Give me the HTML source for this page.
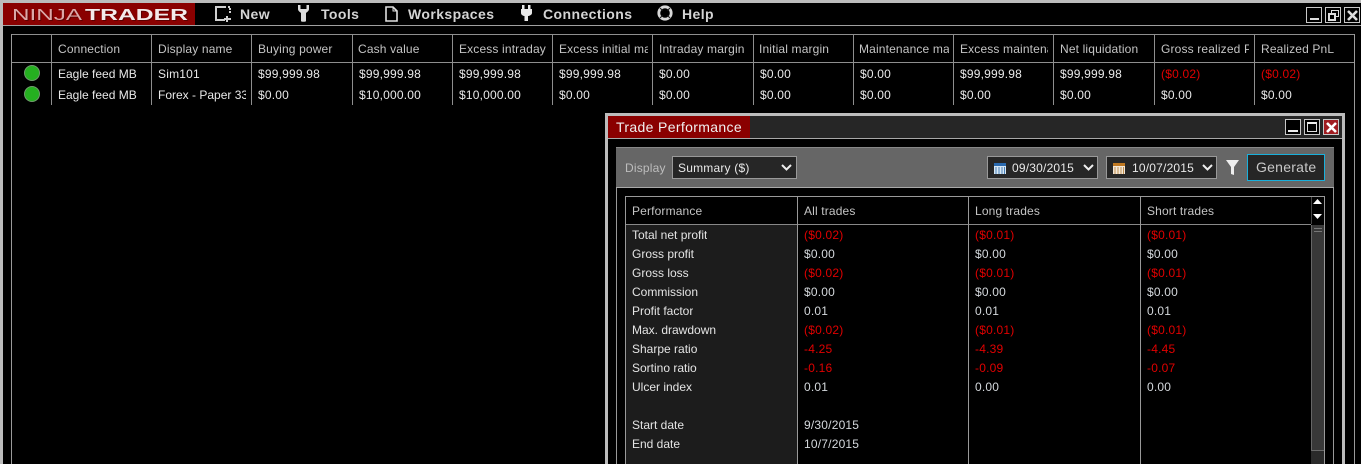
<!DOCTYPE html>
<html><head><meta charset="utf-8"><style>
html,body{margin:0;padding:0;background:#000;width:1361px;height:464px;overflow:hidden}
body{position:relative;font-family:"Liberation Sans",sans-serif;font-size:12px;color:#e8e8e8}
div{position:absolute;box-sizing:border-box}
svg{position:absolute;overflow:visible}
.t{white-space:nowrap;overflow:hidden;height:14px;line-height:14px;letter-spacing:.2px}
.t.h{color:#c4c4c4;top:42px;letter-spacing:.15px}
.a{top:67px}.b{top:88px}
.t.n{letter-spacing:0}
.t.m{font-weight:bold;font-size:14px;color:#d4d4d4;top:6px;height:16px;line-height:16px;letter-spacing:.42px}
.v{background:#8e8e8e;width:1px;top:34px;height:71px}
.wv{background:#999;width:1px;top:197px;height:267px}
.l{left:632px;color:#e4e4e4}
.c1{left:804px;color:#d4d8dc}.c2{left:975px;color:#d4d8dc}.c3{left:1147px;color:#d4d8dc}
.t.r{color:#e00000}
.dd{background:#262626;border:1px solid #999;height:23px;top:156px}
.btn{border:1px solid #c8c8c8;background:#000}
</style></head><body>
<!-- outer frame -->
<div style="left:0;top:0;width:1361px;height:3px;background:#bcbcbc"></div>
<div style="left:0;top:0;width:3px;height:464px;background:#bcbcbc"></div>
<div style="left:3px;top:25px;width:1358px;height:1px;background:#a0a0a0"></div>
<!-- logo -->
<div style="left:3px;top:3px;width:192px;height:22px;background:#8a0000"></div>
<svg style="left:0;top:0" width="200" height="26" font-family="Liberation Sans" font-size="15.500">
<text x="13" y="21" fill="#5a0000" textLength="70" lengthAdjust="spacingAndGlyphs">NINJA</text>
<text x="86" y="21" font-weight="bold" fill="#5a0000" textLength="103" lengthAdjust="spacingAndGlyphs">TRADER</text>
<text x="12" y="20" fill="#dca8a8" textLength="70" lengthAdjust="spacingAndGlyphs">NINJA</text>
<text x="85" y="20" font-weight="bold" fill="#f4eaea" textLength="103" lengthAdjust="spacingAndGlyphs">TRADER</text>
</svg>
<!-- menu -->
<svg style="left:215px;top:6px" width="16" height="16" fill="none" stroke="#d0d0d0" stroke-width="2">
<path d="M11 1H1V14H10"/><path d="M13 1H15V8" stroke-dasharray="2 1"/><path d="M12 10V16M9 13H16"/></svg>
<div class="t m" style="left:240px">New</div>
<svg style="left:297px;top:5px" width="13" height="17" fill="#dcdcdc"><path d="M1 0V4C1 6 3 7 4 8V16C4 17 9 17 9 16V8C10 7 12 6 12 4V0L9.500 0V4H3.500V0Z"/></svg>
<div class="t m" style="left:321px">Tools</div>
<svg style="left:385px;top:6px" width="13" height="16" fill="none" stroke="#e0e0e0" stroke-width="1.600"><path d="M1 1H8L12 5V15H1Z"/><path d="M8 1V5H12" stroke-width="1"/></svg>
<div class="t m" style="left:408px">Workspaces</div>
<svg style="left:520px;top:5px" width="13" height="17" fill="#e8e8e8"><path d="M2 0H4.500V4H8V0H10.500V4H12V8C12 10 9 11 8 11V16H4.500V11C3.500 11 1 10 1 8V4H2Z"/></svg>
<div class="t m" style="left:543px">Connections</div>
<svg style="left:657px;top:5px" width="16" height="16" fill="none"><circle cx="8" cy="8" r="6.200" stroke="#d8d8d8" stroke-width="2.800"/><path d="M3 3L5.500 5.500M13 3L10.500 5.500M3 13L5.500 10.500M13 13L10.500 10.500" stroke="#222" stroke-width="1.200"/></svg>
<div class="t m" style="left:682px">Help</div>
<!-- main window buttons -->
<div class="btn" style="left:1306px;top:7px;width:16px;height:16px"><div style="left:3px;top:10px;width:9px;height:2px;background:#ddd"></div></div>
<div class="btn" style="left:1325px;top:7px;width:16px;height:16px">
<div style="left:5px;top:2px;width:8px;height:7px;border:1.500px solid #ddd"></div>
<div style="left:2px;top:5px;width:8px;height:8px;border:2px solid #ddd;background:#000"></div></div>
<div class="btn" style="left:1344px;top:7px;width:16px;height:16px">
<svg style="left:2px;top:2px" width="11" height="11" stroke="#ddd" stroke-width="2.600"><path d="M1 1L10 10M10 1L1 10"/></svg></div>
<!-- main table -->
<div style="left:11px;top:34px;width:1343px;height:1px;background:#8e8e8e"></div>
<div style="left:11px;top:62px;width:1343px;height:1px;background:#8e8e8e"></div>
<div style="left:11px;top:34px;width:1px;height:430px;background:#9a9a9a"></div>
<div style="left:1354px;top:34px;width:1px;height:430px;background:#9a9a9a"></div>
<div class="v" style="left:51px"></div><div class="v" style="left:151px"></div><div class="v" style="left:251px"></div><div class="v" style="left:352px"></div><div class="v" style="left:452px"></div><div class="v" style="left:552px"></div><div class="v" style="left:652px"></div><div class="v" style="left:753px"></div><div class="v" style="left:853px"></div><div class="v" style="left:953px"></div><div class="v" style="left:1053px"></div><div class="v" style="left:1154px"></div><div class="v" style="left:1254px"></div>
<div class="t h" style="left:58px;width:90px">Connection</div>
<div class="t h" style="left:158px;width:90px">Display name</div>
<div class="t h" style="left:258px;width:90px">Buying power</div>
<div class="t h" style="left:358px;width:90px">Cash value</div>
<div class="t h" style="left:459px;width:87px">Excess intraday</div>
<div class="t h" style="left:559px;width:89px">Excess initial margin</div>
<div class="t h" style="left:659px;width:90px">Intraday margin</div>
<div class="t h" style="left:759px;width:90px">Initial margin</div>
<div class="t h" style="left:859px;width:90px">Maintenance margin</div>
<div class="t h" style="left:960px;width:88px">Excess maintenance</div>
<div class="t h" style="left:1060px;width:90px">Net liquidation</div>
<div class="t h" style="left:1161px;width:88px">Gross realized PnL</div>
<div class="t h" style="left:1261px;width:90px">Realized PnL</div>
<div style="left:24px;top:65px;width:16px;height:16px;border-radius:50%;background:#25b020;border:1px solid #6f9a6c"></div>
<div style="left:24px;top:86px;width:16px;height:16px;border-radius:50%;background:#25b020;border:1px solid #6f9a6c"></div>
<div class="t a n" style="left:58px">Eagle feed MB</div><div class="t a" style="left:158px">Sim101</div><div class="t a" style="left:258px">$99,999.98</div><div class="t a" style="left:359px">$99,999.98</div><div class="t a" style="left:459px">$99,999.98</div><div class="t a" style="left:559px">$99,999.98</div><div class="t a" style="left:659px">$0.00</div><div class="t a" style="left:760px">$0.00</div><div class="t a" style="left:860px">$0.00</div><div class="t a" style="left:960px">$99,999.98</div><div class="t a" style="left:1060px">$99,999.98</div><div class="t a r" style="left:1161px">($0.02)</div><div class="t a r" style="left:1261px">($0.02)</div>
<div class="t b n" style="left:58px">Eagle feed MB</div><div class="t b n" style="left:158px;width:88px">Forex - Paper 33333</div><div class="t b" style="left:258px">$0.00</div><div class="t b" style="left:359px">$10,000.00</div><div class="t b" style="left:459px">$10,000.00</div><div class="t b" style="left:559px">$0.00</div><div class="t b" style="left:659px">$0.00</div><div class="t b" style="left:760px">$0.00</div><div class="t b" style="left:860px">$0.00</div><div class="t b" style="left:960px">$0.00</div><div class="t b" style="left:1060px">$0.00</div><div class="t b" style="left:1161px">$0.00</div><div class="t b" style="left:1261px">$0.00</div>
<!-- trade performance window -->
<div style="left:605px;top:113px;width:740px;height:351px;background:#000;border:3px solid #bcbcbc;border-bottom:0"></div>
<div style="left:608px;top:116px;width:734px;height:22px;background:#262626"></div>
<div style="left:608px;top:138px;width:734px;height:1px;background:#a8a8a8"></div>
<div style="left:608px;top:116px;width:142px;height:22px;background:#8a0000"></div>
<div class="t" style="left:616px;top:119px;height:17px;line-height:17px;font-size:14px;color:#f0f0f0;letter-spacing:.35px">Trade Performance</div>
<div class="btn" style="left:1285px;top:119px;width:16px;height:16px"><div style="left:2px;top:10px;width:10px;height:2px;background:#eee"></div></div>
<div class="btn" style="left:1304px;top:119px;width:16px;height:16px"><div style="left:2px;top:2px;width:10px;height:10px;border:1px solid #ddd;border-top:2px solid #eee"></div></div>
<div class="btn" style="left:1323px;top:119px;width:16px;height:16px;background:#a01c20"><svg style="left:2px;top:2px" width="11" height="11" stroke="#fff" stroke-width="2.600"><path d="M1 1L10 10M10 1L1 10"/></svg></div>
<div style="left:616px;top:147px;width:1px;height:317px;background:#999"></div>
<div style="left:1333px;top:147px;width:1px;height:317px;background:#999"></div>
<div style="left:616px;top:147px;width:718px;height:41px;background:#666;border-top:1px solid #888;border-bottom:1px solid #aaa"></div>
<div class="t" style="left:625px;top:161px;color:#bdbdbd">Display</div>
<div class="dd" style="left:672px;width:125px"></div>
<div class="t" style="left:678px;top:161px;color:#e8e8e8">Summary ($)</div>
<svg style="left:781px;top:164px" width="11" height="7" fill="none" stroke="#eee" stroke-width="2"><path d="M1 1L5.500 5.500L10 1"/></svg>
<div class="dd" style="left:987px;width:111px"></div>
<svg style="left:994px;top:163px" width="12" height="11"><rect width="12" height="11" fill="#d8e8f4"/><rect width="12" height="3" fill="#2a6ab0"/><path d="M2 4V11M5 4V11M8 4V11M10.500 4V11" stroke="#4a80b8"/></svg>
<div class="t" style="left:1012px;top:161px;color:#e8e8e8">09/30/2015</div>
<svg style="left:1083px;top:164px" width="11" height="7" fill="none" stroke="#eee" stroke-width="2"><path d="M1 1L5.500 5.500L10 1"/></svg>
<div class="dd" style="left:1106px;width:111px"></div>
<svg style="left:1113px;top:163px" width="12" height="11"><rect width="12" height="11" fill="#f4e8d8"/><rect width="12" height="3" fill="#c07820"/><path d="M2 4V11M5 4V11M8 4V11M10.500 4V11" stroke="#c09050"/></svg>
<div class="t" style="left:1132px;top:161px;color:#e8e8e8">10/07/2015</div>
<svg style="left:1202px;top:164px" width="11" height="7" fill="none" stroke="#eee" stroke-width="2"><path d="M1 1L5.500 5.500L10 1"/></svg>
<svg style="left:1226px;top:160px" width="13" height="15" fill="#eee"><path d="M0 0H13L8 7V15L5 14V7Z"/></svg>
<div style="left:1247px;top:154px;width:78px;height:27px;background:#262626;border:1px solid #19b0dc"></div>
<div class="t" style="left:1256px;top:159px;height:17px;line-height:17px;font-size:14px;color:#c8c8c8;letter-spacing:.25px">Generate</div>
<!-- perf table -->
<div style="left:626px;top:225px;width:171px;height:239px;background:#1c1c1c"></div>
<div style="left:625px;top:196px;width:700px;height:1px;background:#999"></div>
<div style="left:625px;top:224px;width:686px;height:1px;background:#888"></div>
<div class="wv" style="left:625px"></div><div class="wv" style="left:797px"></div><div class="wv" style="left:968px"></div><div class="wv" style="left:1140px"></div><div class="wv" style="left:1324px;top:196px;height:268px"></div>
<div class="t h" style="left:632px;top:204px">Performance</div>
<div class="t h" style="left:804px;top:204px">All trades</div>
<div class="t h" style="left:975px;top:204px">Long trades</div>
<div class="t h" style="left:1147px;top:204px">Short trades</div>
<!-- scrollbar -->
<div style="left:1311px;top:197px;width:1px;height:27px;background:#444"></div>
<svg style="left:1312px;top:199px" width="12" height="24" fill="#fff"><path d="M5.500 0L10 5H1Z"/><path d="M1 15H10L5.500 20Z"/></svg>
<div style="left:1311px;top:225px;width:13px;height:239px;background:#2a2a2a"></div>
<div style="left:1311px;top:225px;width:13px;height:226px;background:#383838;border-left:1px solid #666;border-bottom:1px solid #6a6a6a"></div>
<div style="left:1314px;top:228px;width:8px;height:1px;background:#777"></div>
<div style="left:1314px;top:231px;width:8px;height:1px;background:#777"></div>
<!-- rows -->
<div class="t l n" style="top:228px">Total net profit</div><div class="t c1 r" style="top:228px">($0.02)</div><div class="t c2 r" style="top:228px">($0.01)</div><div class="t c3 r" style="top:228px">($0.01)</div>
<div class="t l n" style="top:247px">Gross profit</div><div class="t c1" style="top:247px">$0.00</div><div class="t c2" style="top:247px">$0.00</div><div class="t c3" style="top:247px">$0.00</div>
<div class="t l n" style="top:266px">Gross loss</div><div class="t c1 r" style="top:266px">($0.02)</div><div class="t c2 r" style="top:266px">($0.01)</div><div class="t c3 r" style="top:266px">($0.01)</div>
<div class="t l n" style="top:285px">Commission</div><div class="t c1" style="top:285px">$0.00</div><div class="t c2" style="top:285px">$0.00</div><div class="t c3" style="top:285px">$0.00</div>
<div class="t l n" style="top:304px">Profit factor</div><div class="t c1" style="top:304px">0.01</div><div class="t c2" style="top:304px">0.01</div><div class="t c3" style="top:304px">0.01</div>
<div class="t l n" style="top:323px">Max. drawdown</div><div class="t c1 r" style="top:323px">($0.02)</div><div class="t c2 r" style="top:323px">($0.01)</div><div class="t c3 r" style="top:323px">($0.01)</div>
<div class="t l n" style="top:342px">Sharpe ratio</div><div class="t c1 r" style="top:342px">-4.25</div><div class="t c2 r" style="top:342px">-4.39</div><div class="t c3 r" style="top:342px">-4.45</div>
<div class="t l n" style="top:361px">Sortino ratio</div><div class="t c1 r" style="top:361px">-0.16</div><div class="t c2 r" style="top:361px">-0.09</div><div class="t c3 r" style="top:361px">-0.07</div>
<div class="t l n" style="top:380px">Ulcer index</div><div class="t c1" style="top:380px">0.01</div><div class="t c2" style="top:380px">0.00</div><div class="t c3" style="top:380px">0.00</div>
<div class="t l n" style="top:418px">Start date</div><div class="t c1" style="top:418px">9/30/2015</div>
<div class="t l n" style="top:437px">End date</div><div class="t c1" style="top:437px">10/7/2015</div>
</body></html>
